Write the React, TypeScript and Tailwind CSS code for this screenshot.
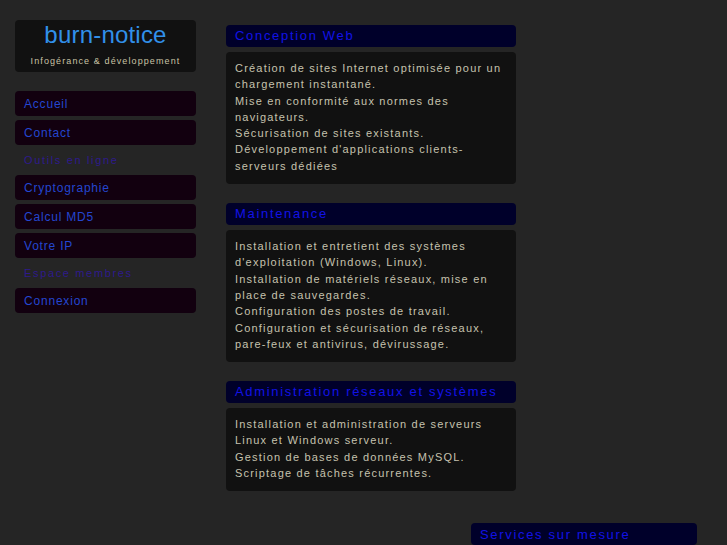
import React from "react";

const font = { fontFamily: '"Liberation Sans", Arial, sans-serif' };

function NavItem({ label }: { label: string }) {
  return (
    <div className="h-[25px] rounded-[4px] bg-[#12000f] flex items-center pl-[9px] text-[12px] tracking-[0.8px] text-[#2446d0]">
      {label}
    </div>
  );
}

function NavLabel({ label }: { label: string }) {
  return (
    <div className="h-[22px] flex items-center pl-[9px] text-[11px] tracking-[1.65px] text-[#2e1a8c]">
      {label}
    </div>
  );
}

function Section({ title, lines }: { title: string; lines: string[] }) {
  return (
    <div className="flex flex-col gap-[5px]">
      <div className="h-[22px] rounded-[4px] bg-[#00002a] flex items-center pl-[9px] text-[13px] tracking-[1.68px] text-[#1212e6]">
        {title}
      </div>
      <div className="rounded-[4px] bg-[#111111] px-[9px] pt-[8px] pb-[10px] text-[11px] leading-[16.3px] tracking-[1.2px] text-[#c6c2ae]">
        {lines.map((l, i) => (
          <div key={i} className="whitespace-nowrap">
            {l}
          </div>
        ))}
      </div>
    </div>
  );
}

export default function App() {
  return (
    <div className="min-h-[545px] bg-[#252525] overflow-hidden" style={font}>
      <div className="flex pl-[15px]">
        <div className="w-[181px] mt-[20px] flex flex-col">
          <div className="h-[52px] rounded-[4px] bg-[#111111] flex flex-col items-center">
            <div className="text-[24px] leading-[28px] mt-[1px] tracking-[0.2px] text-[#3190ea]">burn-notice</div>
            <div className="text-[9px] leading-[12px] mt-[6px] tracking-[1.1px] text-[#c8c2a4]">
              Infogérance &amp; développement
            </div>
          </div>
          <div className="mt-[19px] flex flex-col gap-[4px]">
            <NavItem label="Accueil" />
            <NavItem label="Contact" />
            <NavLabel label="Outils en ligne" />
            <NavItem label="Cryptographie" />
            <NavItem label="Calcul MD5" />
            <NavItem label="Votre IP" />
            <NavLabel label="Espace membres" />
            <NavItem label="Connexion" />
          </div>
        </div>
        <div className="w-[290px] ml-[30px] mt-[25px] flex flex-col gap-[19px]">
          <Section
            title="Conception Web"
            lines={[
              "Création de sites Internet optimisée pour un",
              "chargement instantané.",
              "Mise en conformité aux normes des",
              "navigateurs.",
              "Sécurisation de sites existants.",
              "Développement d'applications clients-",
              "serveurs dédiées",
            ]}
          />
          <Section
            title="Maintenance"
            lines={[
              "Installation et entretient des systèmes",
              "d'exploitation (Windows, Linux).",
              "Installation de matériels réseaux, mise en",
              "place de sauvegardes.",
              "Configuration des postes de travail.",
              "Configuration et sécurisation de réseaux,",
              "pare-feux et antivirus, dévirussage.",
            ]}
          />
          <Section
            title="Administration réseaux et systèmes"
            lines={[
              "Installation et administration de serveurs",
              "Linux et Windows serveur.",
              "Gestion de bases de données MySQL.",
              "Scriptage de tâches récurrentes.",
            ]}
          />
        </div>
      </div>
      <div className="ml-[471px] mt-[32px] w-[226px] h-[22px] rounded-[4px] bg-[#00002a] flex items-center pl-[9px] text-[13px] tracking-[1.68px] text-[#1212e6]">
        Services sur mesure
      </div>
    </div>
  );
}
